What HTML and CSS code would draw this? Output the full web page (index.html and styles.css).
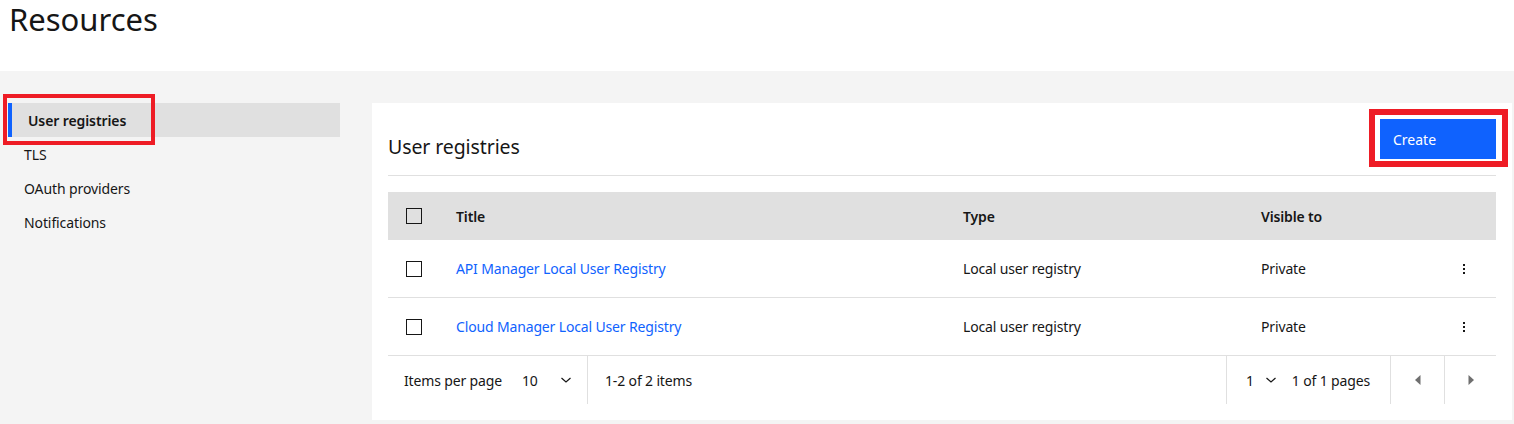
FILE: index.html
```html
<!DOCTYPE html>
<html lang="en">
<head>
<meta charset="utf-8">
<title>Resources</title>
<link rel="stylesheet" href="styles.css">
</head>
<body>
<header class="page-header">
  <h1 class="page-title">Resources</h1>
</header>
<main class="main">
  <nav class="sidenav">
    <a class="nav-item nav-item--active">User registries</a>
    <a class="nav-item">TLS</a>
    <a class="nav-item">OAuth providers</a>
    <a class="nav-item">Notifications</a>
    <span class="highlight highlight--nav"></span>
  </nav>
  <section class="panel">
    <div class="panel-head">
      <h2 class="panel-title">User registries</h2>
      <button class="btn-primary">Create</button>
      <span class="highlight highlight--btn"></span>
    </div>
    <div class="table">
      <div class="tr th">
        <div class="c-check"><span class="checkbox"></span></div>
        <div class="c-title">Title</div>
        <div class="c-type">Type</div>
        <div class="c-vis">Visible to</div>
        <div class="c-menu"></div>
      </div>
      <div class="tr">
        <div class="c-check"><span class="checkbox"></span></div>
        <div class="c-title"><a class="link">API Manager Local User Registry</a></div>
        <div class="c-type">Local user registry</div>
        <div class="c-vis">Private</div>
        <div class="c-menu"><svg width="16" height="16" viewBox="0 0 16 16"><rect x="7" y="3" width="2" height="2" fill="#161616"/><rect x="7" y="7" width="2" height="2" fill="#161616"/><rect x="7" y="11" width="2" height="2" fill="#161616"/></svg></div>
      </div>
      <div class="tr">
        <div class="c-check"><span class="checkbox"></span></div>
        <div class="c-title"><a class="link">Cloud Manager Local User Registry</a></div>
        <div class="c-type">Local user registry</div>
        <div class="c-vis">Private</div>
        <div class="c-menu"><svg width="16" height="16" viewBox="0 0 16 16"><rect x="7" y="3" width="2" height="2" fill="#161616"/><rect x="7" y="7" width="2" height="2" fill="#161616"/><rect x="7" y="11" width="2" height="2" fill="#161616"/></svg></div>
      </div>
      <div class="pager">
        <div class="pager-left">
          <span class="pager-label">Items per page</span>
          <span class="pager-select">10 <svg class="chev" width="12" height="8" viewBox="0 0 12 8"><path d="M1.5 2 L6 6 L10.5 2" fill="none" stroke="#161616" stroke-width="1.2"/></svg></span>
        </div>
        <div class="pager-count">1-2 of 2 items</div>
        <div class="pager-pages">
          <span class="pager-select pager-select--page">1 <svg class="chev" width="12" height="8" viewBox="0 0 12 8"><path d="M1.5 2 L6 6 L10.5 2" fill="none" stroke="#161616" stroke-width="1.2"/></svg></span>
          <span class="pager-of">1 of 1 pages</span>
        </div>
        <div class="pager-btn"><svg width="8" height="12" viewBox="0 0 8 12"><path d="M6.5 1 L6.5 11 L1 6 Z" fill="#6f6f6f"/></svg></div>
        <div class="pager-btn pager-btn--last"><svg width="8" height="12" viewBox="0 0 8 12"><path d="M1.5 1 L1.5 11 L7 6 Z" fill="#6f6f6f"/></svg></div>
      </div>
    </div>
  </section>
</main>
</body>
</html>
```

FILE: styles.css
```css
* { box-sizing: border-box; }
html, body { margin: 0; padding: 0; }
body {
  font-family: "Noto Sans", "Liberation Sans", sans-serif;
  color: #161616;
  background: #f4f4f4;
  width: 1514px;
  height: 424px;
  overflow: hidden;
}
.page-header {
  background: #ffffff;
  height: 71px;
  padding: 1px 0 0 9px;
}
.page-title {
  margin: 0;
  font-size: 31px;
  font-weight: 400;
  line-height: 37px;
  letter-spacing: 0;
}
.main {
  display: flex;
  height: 353px;
  background: #f4f4f4;
}
.sidenav {
  position: relative;
  width: 340px;
  padding: 32px 0 0 8px;
  display: flex;
  flex-direction: column;
}
.nav-item {
  display: flex;
  align-items: center;
  height: 34px;
  padding-left: 16px;
  font-size: 14px;
  letter-spacing: -0.1px;
  color: #161616;
}
.nav-item--active {
  background: #e0e0e0;
  border-left: 4px solid #0f62fe;
  font-weight: 600;
}
.highlight {
  position: absolute;
  border: 4px solid #ee1c25;
  pointer-events: none;
}
.highlight--nav {
  left: 3px;
  top: 23px;
  width: 152px;
  height: 51px;
}
.panel {
  margin: 32px 0 0 32px;
  width: 1140px;
  height: 317px;
  background: #ffffff;
  padding: 16px;
}
.panel-head {
  position: relative;
  display: flex;
  align-items: flex-end;
  justify-content: space-between;
  padding-bottom: 16px;
  border-bottom: 1px solid #e0e0e0;
  margin-bottom: 16px;
}
.panel-title {
  margin: 0;
  font-size: 19.5px;
  font-weight: 400;
  line-height: 24px;
  letter-spacing: -0.1px;
}
.btn-primary {
  width: 116px;
  height: 40px;
  background: #0f62fe;
  color: #ffffff;
  border: none;
  text-align: left;
  padding: 0 13px;
  font-family: inherit;
  font-size: 14px;
}
.highlight--btn {
  right: -12px;
  top: -10px;
  width: 139px;
  height: 58px;
  border-width: 6px;
}
.table { display: flex; flex-direction: column; }
.tr {
  display: flex;
  align-items: center;
  height: 58px;
  border-bottom: 1px solid #e0e0e0;
  font-size: 14px;
  letter-spacing: -0.15px;
}
.th {
  height: 48px;
  background: #e0e0e0;
  font-weight: 600;
  border-bottom: none;
}
.c-check { width: 68px; padding-left: 18px; display: flex; }
.c-title { width: 507px; }
.c-type { width: 298px; }
.c-vis { width: 191px; }
.c-menu { width: 44px; padding-left: 4px; display: flex; }
.checkbox {
  width: 16px;
  height: 16px;
  border: 1px solid #161616;
  background: #ffffff;
  display: block;
}
.th .checkbox { background: transparent; }
.link { color: #0f62fe; text-decoration: none; }
.pager {
  display: flex;
  align-items: stretch;
  height: 48px;
  font-size: 14px;
  letter-spacing: -0.15px;
}
.pager > div { display: flex; align-items: center; }
.pager-left {
  width: 200px;
  padding-left: 16px;
  border-right: 1px solid #e0e0e0;
}
.pager-label { margin-right: 20px; }
.pager-select { display: inline-flex; align-items: center; }
.chev { margin-left: 22px; }
.pager-count { flex: 1; padding-left: 17px; }
.pager-pages {
  width: 164px;
  padding-left: 19px;
  border-left: 1px solid #e0e0e0;
}
.pager-select--page .chev { margin-left: 11px; }
.pager-of { margin-left: 15px; }
.pager-btn {
  width: 54px;
  justify-content: center;
  border-left: 1px solid #e0e0e0;
}
.pager-btn--last { width: 52px; }
```
